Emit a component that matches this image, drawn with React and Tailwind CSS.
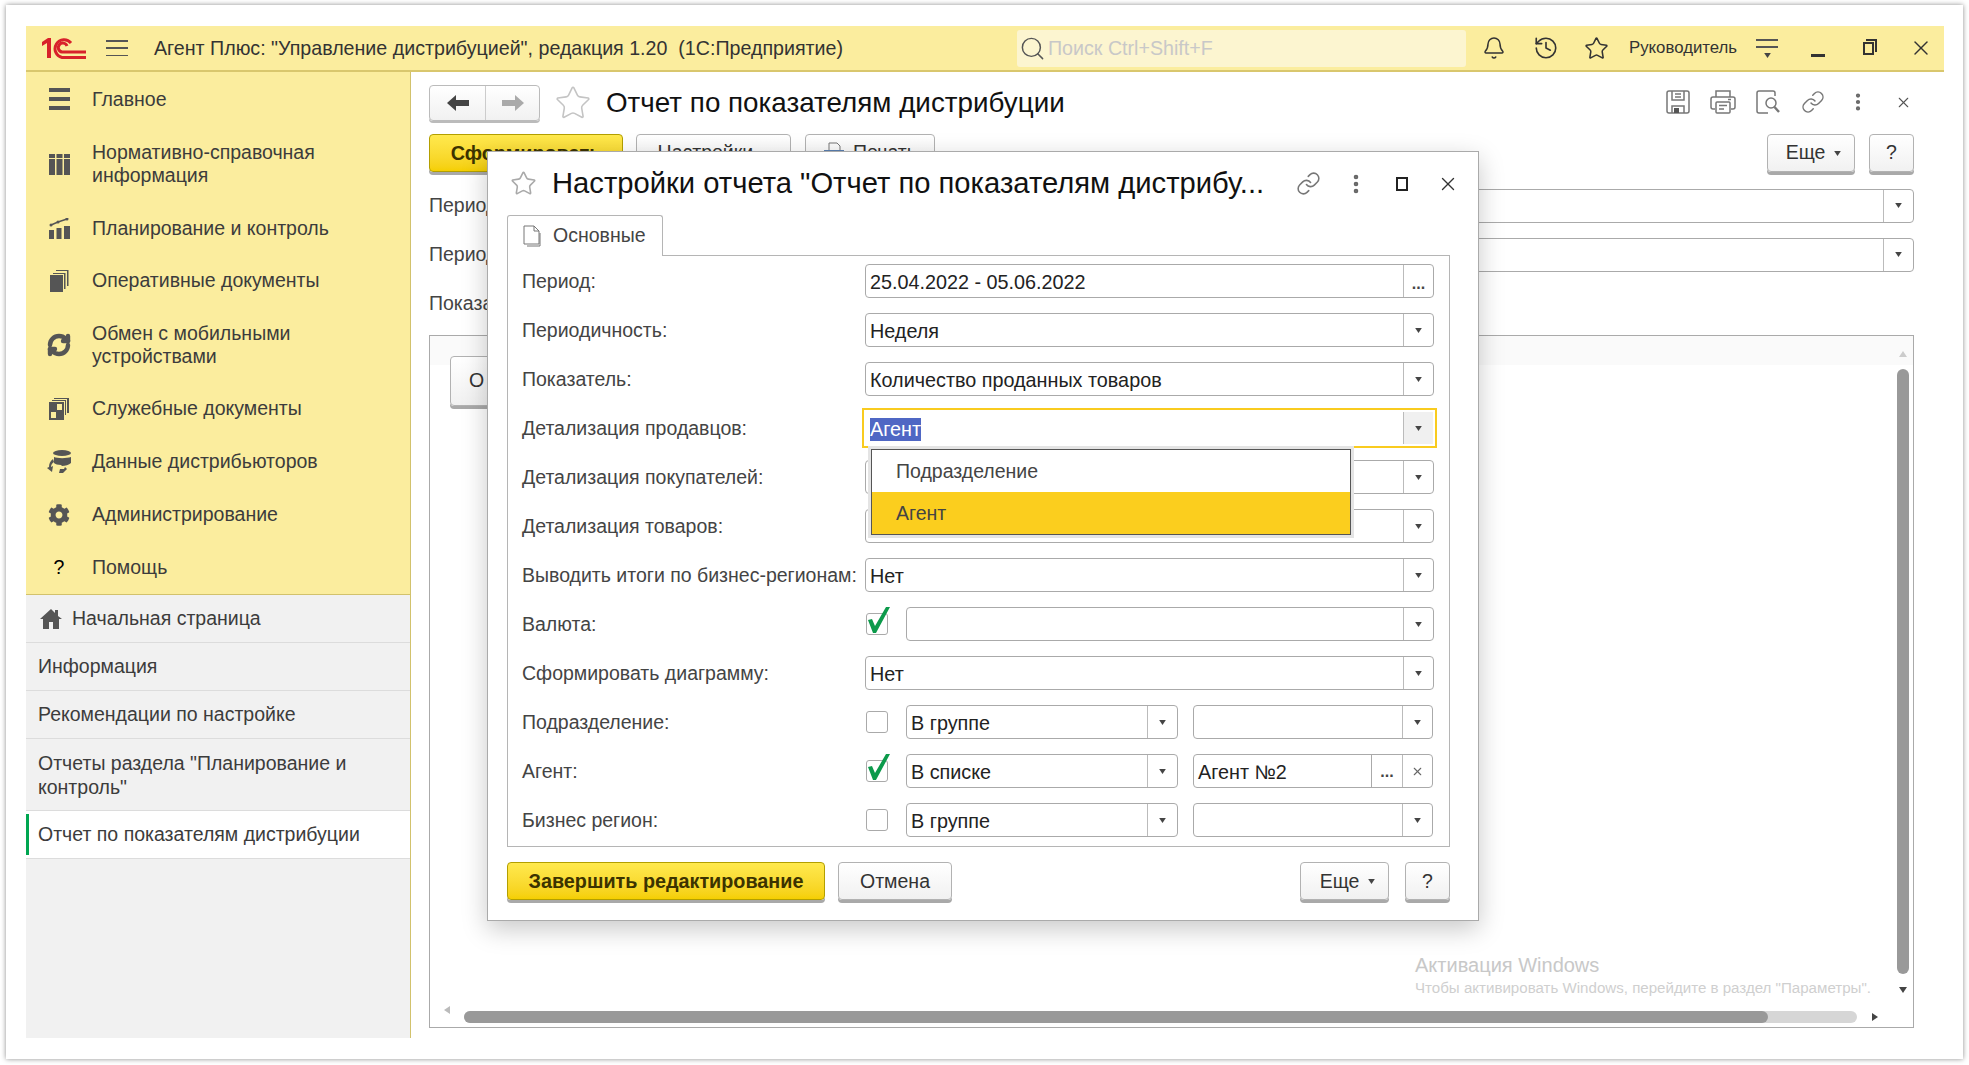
import { Bell, History, Star, Link, EllipsisVertical, X, Search, RefreshCw } from 'lucide-react';
import { FaCog } from 'react-icons/fa';

const menu = [
  { label: ['Главное'], icon: 'list', height: 'h-[54px]' },
  { label: ['Нормативно-справочная', 'информация'], icon: 'grid', height: 'h-[76px]' },
  { label: ['Планирование и контроль'], icon: 'chart', height: 'h-[52px]' },
  { label: ['Оперативные документы'], icon: 'docs', height: 'h-[53px]' },
  { label: ['Обмен с мобильными', 'устройствами'], icon: 'sync', height: 'h-[75px]' },
  { label: ['Служебные документы'], icon: 'service', height: 'h-[53px]' },
  { label: ['Данные дистрибьюторов'], icon: 'data', height: 'h-[53px]' },
  { label: ['Администрирование'], icon: 'gear', height: 'h-[53px]' },
  { label: ['Помощь'], icon: 'help', height: 'h-[53px]' },
];

function MenuIcon({ name }) {
  if (name === 'list') return (
    <svg width="21" height="22" viewBox="0 0 21 22" fill="#555"><rect width="21" height="4" /><rect y="9" width="21" height="4" /><rect y="18" width="21" height="4" /></svg>
  );
  if (name === 'grid') return (
    <svg width="21" height="21" viewBox="0 0 21 21" fill="#555"><rect width="6" height="4" /><rect x="7.500" width="6" height="4" /><rect x="15" width="6" height="4" /><rect y="5" width="6" height="16" /><rect x="7.500" y="5" width="6" height="16" /><rect x="15" y="5" width="6" height="16" /></svg>
  );
  if (name === 'chart') return (
    <svg width="21" height="21" viewBox="0 0 21 21" fill="#555"><rect y="12" width="5" height="9" /><rect x="7.500" y="10" width="5" height="11" /><rect x="15" y="8" width="6" height="13" /><path d="M2 7 L9 4 L18 1" stroke="#555" strokeWidth="1.500" fill="none" /><circle cx="2" cy="7" r="1.500" /><circle cx="9" cy="4" r="1.500" /><circle cx="18" cy="1" r="1.500" /></svg>
  );
  if (name === 'docs') return (
    <svg width="19" height="22" viewBox="0 0 19 22" fill="#555"><rect y="5" width="13" height="17" /><path d="M14 4h1.500v15H14zM3 3h12.500v1H3zM17 1h1.500v15H17zM6 0h12.500v1H6z" /></svg>
  );
  if (name === 'sync') return <RefreshCw size={24} color="#555" strokeWidth={4.4} />;
  if (name === 'service') return (
    <svg width="20" height="22" viewBox="0 0 20 22" fill="#555"><path d="M0 4h15v18H0zM3 2h14v15h-1V3H3zM5 0h15v15h-2V1H5z" /><rect x="8" y="6" width="5" height="6" fill="#fbed9e" /><rect x="2" y="14" width="5" height="6" fill="#fbed9e" /></svg>
  );
  if (name === 'data') return (
    <svg width="24" height="23" viewBox="0 0 24 23" fill="#555"><ellipse cx="15" cy="3" rx="9" ry="3" /><path d="M7 7c3 1.500 13 1.500 17 0v6c-2 2-6 3-9 3l-1-1c-3 0-6-1-7-2z" /><path d="M6 9l1 3c-2 1-3 3-3 5l2-1-1 6-5-4 2-1c0-3 1-6 4-8z" /><path d="M12 23l1-4h4l1-2 2 2-4 4z" /></svg>
  );
  if (name === 'gear') return <FaCog size={22} color="#555" />;
  return <span className="text-[19.500px] text-black">?</span>;
}

function Logo() {
  return (
    <svg width="44" height="21" viewBox="0 0 44 21" fill="none">
      <path d="M0 4 L6 0 H9 V20 H5 V5 L0 8Z" fill="#d8212b" />
      <path d="M29 5 A9 9 0 1 0 20 19.500 H44" stroke="#d8212b" strokeWidth="3" />
      <path d="M25 8 A4.500 4.500 0 1 0 20 14 H44" stroke="#d8212b" strokeWidth="3" />
    </svg>
  );
}

function Caret({ color = '#444' }) {
  return <svg width="7" height="5" viewBox="0 0 8 6" fill={color}><path d="M0 0h8L4 6z" /></svg>;
}

function Btn({ className = '', children }) {
  return (
    <div className={`flex h-[38px] items-center justify-center rounded-[4px] border border-[#b2b2b2] bg-gradient-to-b from-white to-[#f1f1f1] text-[19.500px] text-[#333] shadow-[0_3px_0_#a9a9a9] ${className}`}>
      {children}
    </div>
  );
}

function YellowBtn({ className = '', children }) {
  return (
    <div className={`flex h-[38px] items-center justify-center rounded-[4px] border border-[#b39f00] bg-gradient-to-b from-[#ffe94d] to-[#f5cf00] pt-px text-[19.800px] font-bold text-[#3c3300] shadow-[0_3px_0_#a9a9a9] ${className}`}>
      {children}
    </div>
  );
}

function Input({ value, action = 'select', className = '', focused, extraDots }) {
  return (
    <div className={`flex h-[34px] rounded-[4px] border bg-white text-[19.800px] text-[#222] ${focused ? 'border-transparent' : 'border-[#aaa]'} ${className}`}>
      <div className="min-w-0 flex-1 truncate pl-[4px] leading-[34px]">
        {focused ? <span className="inline-block h-[23px] bg-[#4f67c4] leading-[23px] text-white">{value}</span> : value}
      </div>
      {extraDots && <div className="flex w-[31px] items-end justify-center border-l border-[#aaa] pb-[7px] text-[16px] leading-none font-bold text-[#444]">...</div>}
      <div className={`flex w-[30px] items-center justify-center border-l border-[#bbb] ${focused ? 'bg-[#f0f0f0]' : ''}`}>
        {action === 'select' && <Caret />}
        {action === 'dots' && <span className="mt-[6px] text-[16px] leading-none font-bold text-[#444]">...</span>}
        {action === 'clear' && <X size={13} color="#666" />}
      </div>
    </div>
  );
}

function Checkbox({ checked }) {
  return (
    <div className="relative ml-px h-[22px] w-[22px] rounded-[3px] border border-[#aaa] bg-white">
      {checked && (
        <svg className="absolute -top-[7px] left-[1px]" width="22" height="26" viewBox="0 0 22 26" fill="#0c9a4b">
          <path d="M0 13 L4 12 L7 19 L18 0 L22 0 L8 26 L5 26Z" />
        </svg>
      )}
    </div>
  );
}

function Row({ label, children }) {
  return (
    <div className="flex h-[34px] items-center">
      <div className="w-[344px] shrink-0 pt-px pl-px text-[19.500px] whitespace-nowrap text-[#444]">{label}</div>
      {children}
    </div>
  );
}

function CheckedRow({ label, checked, cond, value, dots }) {
  return (
    <Row label={label}>
      <Checkbox checked={checked} />
      <Input value={cond} className="ml-[18px] w-[272px]" />
      <Input value={value} className="ml-[15px] w-[240px]" action={dots ? 'clear' : 'select'} extraDots={dots} />
    </Row>
  );
}

function Dialog() {
  return (
    <div className="absolute top-[125px] left-[461px] flex h-[770px] w-[992px] flex-col border border-[#aaa] bg-white pr-[28px] pl-[19px] shadow-[0_8px_24px_rgba(0,0,0,0.22)]">
      <div className="flex h-[63px] shrink-0 items-center">
        <Star size={27} color="#a9a9a9" strokeWidth={1.4} className="ml-[3px]" />
        <div className="ml-[15px] text-[29.200px] whitespace-nowrap text-[#111]">Настройки отчета "Отчет по показателям дистрибу...</div>
        <div className="flex-1" />
        <Link size={25} color="#777" strokeWidth={1.5} />
        <EllipsisVertical size={24} color="#666" strokeWidth={2.6} className="ml-[23px]" />
        <div className="ml-[28px] h-[14px] w-[12px] border-2 border-[#222]" />
        <X size={22} color="#333" strokeWidth={1.5} className="-mr-[9px] ml-[29px]" />
      </div>
      <div className="flex">
        <div className="z-10 -mb-px flex h-[41px] w-[156px] items-center rounded-t-[3px] border border-b-0 border-[#b5b5b5] bg-white pl-[15px] text-[19.500px] text-[#444]">
          <svg width="18" height="22" viewBox="0 0 18 22" fill="none" stroke="#777"><path d="M1 1h10l5 5v13H1z" /><path d="M11 1v5h5" /><path d="M4 21h13V8" /></svg>
          <span className="ml-[12px]">Основные</span>
        </div>
      </div>
      <div className="flex flex-col gap-[15px] border border-[#b5b5b5] pt-[8px] pr-[15px] pb-[9px] pl-[13px]">
        <Row label="Период:"><Input value="25.04.2022 - 05.06.2022" action="dots" className="flex-1" /></Row>
        <Row label="Периодичность:"><Input value="Неделя" className="flex-1" /></Row>
        <Row label="Показатель:"><Input value="Количество проданных товаров" className="flex-1" /></Row>
        <Row label="Детализация продавцов:">
          <div className="-m-[3px] flex-1 border-2 border-[#f9cb1f] p-px">
            <Input value="Агент" focused />
          </div>
        </Row>
        <Row label="Детализация покупателей:"><Input value="" className="flex-1" /></Row>
        <Row label="Детализация товаров:"><Input value="" className="flex-1" /></Row>
        <Row label="Выводить итоги по бизнес-регионам:"><Input value="Нет" className="flex-1" /></Row>
        <Row label="Валюта:"><Checkbox checked /><Input value="" className="ml-[18px] flex-1" /></Row>
        <Row label="Сформировать диаграмму:"><Input value="Нет" className="flex-1" /></Row>
        <CheckedRow label="Подразделение:" cond="В группе" value="" />
        <CheckedRow label="Агент:" checked cond="В списке" value="Агент №2" dots />
        <CheckedRow label="Бизнес регион:" cond="В группе" value="" />
      </div>
      <div className="mt-[15px] flex">
        <YellowBtn className="w-[318px]">Завершить редактирование</YellowBtn>
        <Btn className="ml-[13px] w-[114px] pt-px">Отмена</Btn>
        <div className="flex-1" />
        <Btn className="w-[89px] gap-[9px] pt-px pl-[6px]">Еще <Caret /></Btn>
        <Btn className="ml-[16px] w-[45px] pt-px">?</Btn>
      </div>
      {/* выпадающий список */}
      <div className="absolute top-[297px] left-[383px] w-[480px] border border-[#555] bg-white text-[19.500px] text-[#444] shadow-[0_0_0_3px_#e4e4e4]">
        <div className="flex h-[42px] items-center pt-px pl-[24px]">Подразделение</div>
        <div className="flex h-[42px] items-center bg-[#fbce1e] pt-px pl-[24px]">Агент</div>
      </div>
    </div>
  );
}

function SaveIcon() {
  return (
    <svg width="24" height="24" viewBox="0 0 24 24" fill="none" stroke="#777" strokeWidth="1.500">
      <path d="M1 3a2 2 0 0 1 2-2h18a2 2 0 0 1 2 2v18a2 2 0 0 1-2 2H3a2 2 0 0 1-2-2z" />
      <path d="M6 1v9h12V1M9 4h6M9 7h6M6 23v-7h12v7" />
      <rect x="8" y="18" width="5" height="5" fill="#555" stroke="none" />
    </svg>
  );
}

function PrintIcon() {
  return (
    <svg width="26" height="24" viewBox="0 0 26 24" fill="none" stroke="#777" strokeWidth="1.500">
      <path d="M6 7V1h14v6M5 19H3a2 2 0 0 1-2-2V9a2 2 0 0 1 2-2h20a2 2 0 0 1 2 2v8a2 2 0 0 1-2 2h-2" />
      <rect x="6" y="12" width="14" height="11" rx="1" />
      <path d="M9 15.500h8M9 19h5M18 9.500h3" />
    </svg>
  );
}

function PreviewIcon() {
  return (
    <svg width="24" height="24" viewBox="0 0 24 24" fill="none" stroke="#777" strokeWidth="1.500">
      <path d="M19 6V3a2 2 0 0 0-2-2H3a2 2 0 0 0-2 2v18a2 2 0 0 0 2 2h9" />
      <circle cx="15" cy="13" r="5" />
      <path d="M18.500 17l4.500 5" strokeWidth="2.400" />
    </svg>
  );
}

function Report() {
  return (
    <div className="flex min-w-0 flex-1 flex-col pr-[30px] pl-[18px]">
      <div className="flex h-[62px] shrink-0 items-start pt-[13px]">
        <div className="flex h-[36px] w-[111px] rounded-[4px] border border-[#bbb] bg-gradient-to-b from-white to-[#f1f1f1] shadow-[0_2px_0_#bbb]">
          <div className="flex w-[56px] items-center justify-center border-r border-[#ccc]">
            <svg width="22" height="16" viewBox="0 0 22 16" fill="#444"><path d="M9 0v5h13v6H9v5L0 8z" /></svg>
          </div>
          <div className="flex flex-1 items-center justify-center">
            <svg width="22" height="16" viewBox="0 0 22 16" fill="#aaa"><path d="M13 0v5H0v6h13v5l9-8z" /></svg>
          </div>
        </div>
        <Star size={38} color="#c4c4c4" strokeWidth={1} className="mt-[-1px] ml-[14px]" />
        <div className="ml-[14px] text-[27.800px] leading-[35px] whitespace-nowrap text-[#111]">Отчет по показателям дистрибуции</div>
        <div className="flex-1" />
        <div className="-mr-[2px] flex items-center gap-[19px] pt-[5px]">
          <div className="flex w-[26px] justify-center"><SaveIcon /></div>
          <div className="flex w-[26px] justify-center"><PrintIcon /></div>
          <div className="flex w-[26px] justify-center"><PreviewIcon /></div>
          <div className="flex w-[26px] justify-center"><Link size={24} color="#777" strokeWidth={1.5} /></div>
          <div className="flex w-[26px] justify-center"><EllipsisVertical size={22} color="#666" strokeWidth={2.6} /></div>
          <div className="flex w-[26px] justify-center"><X size={17} color="#555" strokeWidth={1.5} /></div>
        </div>
      </div>
      <div className="flex h-[54px] shrink-0 items-start">
        <YellowBtn className="w-[194px]">Сформировать</YellowBtn>
        <Btn className="ml-[13px] w-[155px]">Настройки...</Btn>
        <Btn className="ml-[14px] w-[130px] gap-[8px]">
          <svg width="22" height="22" viewBox="0 0 22 22" fill="none" stroke="#777"><path d="M6 8V1h8l3 3v4" /><rect x="1" y="8" width="20" height="10" fill="#5a7fb0" stroke="none" /></svg>
          Печать
        </Btn>
        <div className="flex-1" />
        <Btn className="w-[88px] gap-[9px] pl-[5px]">Еще <Caret /></Btn>
        <Btn className="ml-[14px] w-[45px]">?</Btn>
      </div>
      <div className="flex h-[34px] items-center pt-px text-[19.500px] text-[#444]">Период:<Input value="" className="ml-[400px] flex-1" /></div>
      <div className="mt-[15px] flex h-[34px] items-center pt-px text-[19.500px] text-[#444]">Период:<Input value="" className="ml-[400px] flex-1" /></div>
      <div className="mt-[20px] pt-px text-[19.500px] leading-[22px] text-[#444]">Показатель:</div>
      <div className="relative mt-[21px] h-[693px] border border-[#aaa] bg-white">
        <div className="h-[29px] bg-[#fafafa]" />
        <Btn className="absolute top-[20px] left-[20px] h-[50px] w-[100px] justify-start pl-[18px]">О</Btn>
        <div className="absolute top-[15px] right-[6px] h-0 w-0 border-x-[4px] border-b-[6px] border-x-transparent border-b-[#ccc]" />
        <div className="absolute top-[33px] right-[4px] h-[605px] w-[12px] rounded-full bg-[#999]" />
        <div className="absolute top-[651px] right-[6px] h-0 w-0 border-x-[4px] border-t-[6px] border-x-transparent border-t-[#444]" />
        <div className="absolute top-[670px] left-[14px] h-0 w-0 border-y-[4px] border-r-[6px] border-y-transparent border-r-[#bbb]" />
        <div className="absolute top-[675px] left-[34px] h-[12px] w-[1393px] rounded-full bg-[#d6d6d6]">
          <div className="h-full w-[1304px] rounded-full bg-[#999]" />
        </div>
        <div className="absolute top-[677px] left-[1442px] h-0 w-0 border-y-[4px] border-l-[6px] border-y-transparent border-l-[#444]" />
        <div className="absolute top-[617px] left-[985px] text-[20px] leading-[24px] whitespace-nowrap text-[#c8c8c8]">Активация Windows</div>
        <div className="absolute top-[643px] left-[985px] text-[15.100px] leading-[18px] whitespace-nowrap text-[#cfcfcf]">Чтобы активировать Windows, перейдите в раздел "Параметры".</div>
      </div>
    </div>
  );
}

export default function App() {
  return (
    <div className="h-[1065px] w-[1969px] overflow-hidden bg-white pt-[5px] pr-[6px] pb-[6px] pl-[6px] font-['Liberation_Sans',Arial,sans-serif]">
      <div className="h-full bg-white pt-[21px] pr-[19px] pb-[21px] pl-[20px] shadow-[0_0_5px_rgba(0,0,0,0.45)]">
        <div className="relative flex h-full flex-col">
          {/* шапка */}
          <div className="flex h-[46px] shrink-0 items-center border-b-2 border-[#d9c76d] bg-[#fbed9e] text-[#333]">
            <div className="ml-[16px] flex"><Logo /></div>
            <div className="ml-[20px] flex h-[16px] w-[22px] flex-col justify-between">
              <div className="h-[1.500px] bg-[#555]" /><div className="h-[1.500px] bg-[#555]" /><div className="h-[1.500px] bg-[#555]" />
            </div>
            <div className="mt-[2px] ml-[26px] w-[863px] text-[19.650px] whitespace-nowrap">Агент Плюс: "Управление дистрибуцией", редакция 1.20&nbsp; (1С:Предприятие)</div>
            <div className="flex h-[37px] w-[449px] items-center rounded-[3px] bg-[#fcf5d0] pl-[2px] text-[19.650px] text-[#c8c8c8]">
              <Search size={27} color="#555" strokeWidth={1.3} />
              <span className="ml-[2px] pt-px">Поиск Ctrl+Shift+F</span>
            </div>
            <Bell size={24} color="#333" strokeWidth={1.5} className="ml-[16px]" />
            <History size={26} color="#333" strokeWidth={1.5} className="ml-[27px]" />
            <Star size={25} color="#333" strokeWidth={1.5} className="ml-[25px]" />
            <div className="ml-[20px] w-[108px] text-[16.800px] whitespace-nowrap">Руководитель</div>
            <div className="ml-[19px] flex w-[22px] flex-col items-center gap-[5px]">
              <div className="h-[2px] w-[22px] bg-[#555]" /><div className="h-[2px] w-[22px] bg-[#555]" /><Caret />
            </div>
            <div className="mt-[14px] ml-[33px] h-[3px] w-[14px] bg-[#333]" />
            <div className="relative ml-[38px] h-[13px] w-[11px] border-2 border-[#333]">
              <div className="absolute -top-[5px] -right-[5px] h-[13px] w-[11px] border-t-2 border-r-2 border-[#333]" />
            </div>
            <X size={24} color="#333" strokeWidth={1.4} className="ml-[35px]" />
          </div>
          <div className="flex min-h-0 flex-1">
            <div className="flex w-[385px] shrink-0 flex-col border-r border-[#d2c26c] bg-[#f1f1f1] text-[19.500px] leading-[23px] text-[#3c3c3c]">
              <div className="border-b border-[#d2c26c] bg-[#fbed9e]">
                {menu.map(item => (
                  <div key={item.icon} className={`flex items-center ${item.height}`}>
                    <div className="flex w-[66px] shrink-0 justify-center"><MenuIcon name={item.icon} /></div>
                    <div>{item.label.map(line => <div key={line}>{line}</div>)}</div>
                  </div>
                ))}
              </div>
              <div className="flex h-[48px] items-center border-b border-[#dcdcdc] pl-[14px]">
                <svg width="22" height="20" viewBox="0 0 22 20" fill="#555"><path d="M0 10 L11 0 L15 4 V1 H18 V7 L22 10 H19 V20 H13 V13 H9 V20 H3 V10Z" /></svg>
                <span className="ml-[10px]">Начальная страница</span>
              </div>
              <div className="flex h-[48px] items-center border-b border-[#dcdcdc] pl-[12px]">Информация</div>
              <div className="flex h-[48px] items-center border-b border-[#dcdcdc] pl-[12px]">Рекомендации по настройке</div>
              <div className="flex h-[72px] items-center border-b border-[#dcdcdc] pl-[12px] leading-[24px]">Отчеты раздела "Планирование и<br />контроль"</div>
              <div className="flex h-[48px] items-center border-b border-[#dcdcdc] bg-white pl-[12px]">
                <div className="mr-[9px] -ml-[12px] h-[41px] w-[3px] bg-[#00a651]" />Отчет по показателям дистрибуции
              </div>
            </div>
            <Report />
          </div>
          <Dialog />
        </div>
      </div>
    </div>
  );
}
